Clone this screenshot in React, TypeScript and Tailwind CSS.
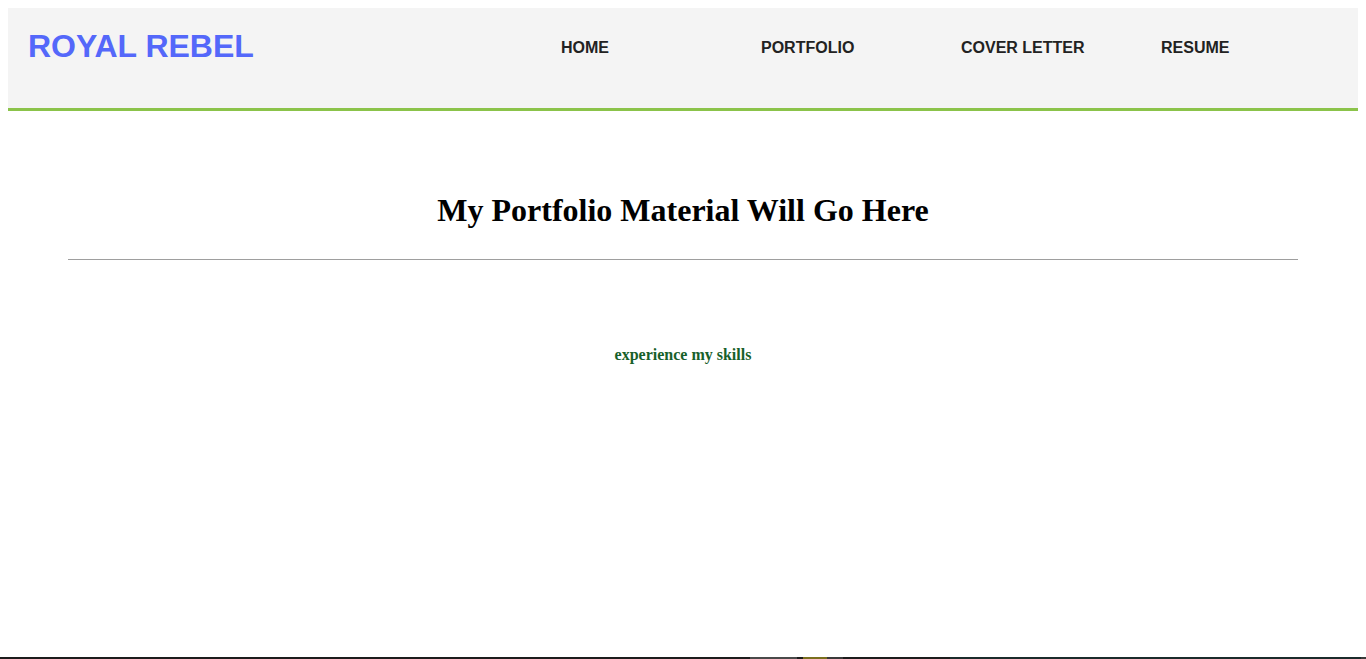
const navItems = ["HOME", "PORTFOLIO", "COVER LETTER", "RESUME"];

export default function App() {
  return (
    <div className="flex h-screen flex-col overflow-hidden bg-white font-['Liberation_Serif',serif]">
      <div className="px-2 pt-2">
        <header className="flex h-[103px] items-start border-b-[3px] border-[#8bc34a] bg-[#f4f4f4] pl-5 font-['Liberation_Sans',Arial,sans-serif]">
          <div className="mt-[22px] w-[533px] shrink-0 text-[32px] font-bold leading-none text-[#5468fa]">
            ROYAL REBEL
          </div>
          <nav className="mt-[32px] flex">
            {navItems.map((item, i) => (
              <a
                key={item}
                href="#"
                className={
                  i < navItems.length - 1
                    ? "w-[200px] shrink-0 text-base font-bold leading-none text-[#222]"
                    : "shrink-0 text-base font-bold leading-none text-[#222]"
                }
              >
                {item}
              </a>
            ))}
          </nav>
        </header>
      </div>

      <main className="flex flex-col items-center">
        <h1 className="mt-[83px] text-[32px] font-bold leading-none text-black">
          My Portfolio Material Will Go Here
        </h1>
        <hr className="mt-[33px] w-[1230px] border-t border-[#9e9e9e]" />
        <p className="mt-[87px] text-base font-bold leading-none text-[#17602a]">
          experience my skills
        </p>
      </main>

      <div className="flex-1" />

      {/* taskbar edge peeking in at the bottom */}
      <div className="flex h-[2px] w-full shrink-0">
        <div className="w-[750px] bg-[#1c1c1c]" />
        <div className="w-[47px] bg-[#4a4a4a]" />
        <div className="w-[6px] bg-[#1c1c1c]" />
        <div className="w-[24px] bg-[#7a6f1e]" />
        <div className="w-[16px] bg-[#3a3a3a]" />
        <div className="w-[107px] bg-[#1c1c1c]" />
        <div className="w-[411px] bg-[#1b2b2b]" />
        <div className="flex-1 bg-[#3a3a3a]" />
      </div>
    </div>
  );
}
